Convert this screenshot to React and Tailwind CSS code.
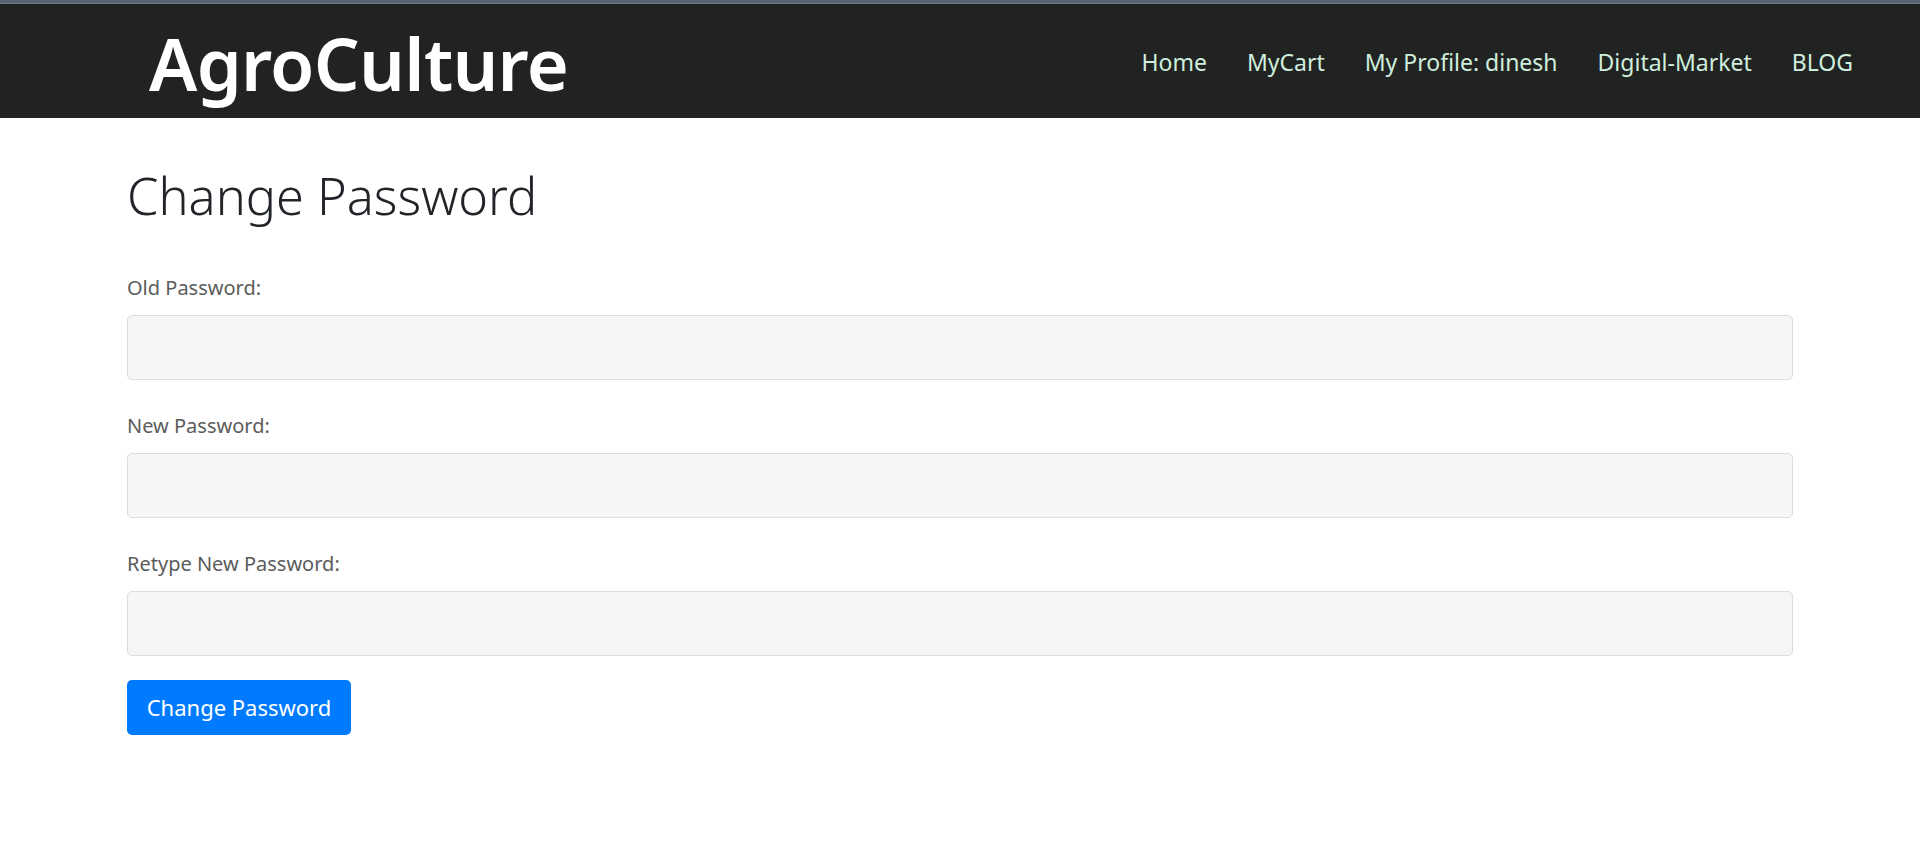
import React from "react";

const navLinks = ["Home", "MyCart", "My Profile: dinesh", "Digital-Market", "BLOG"];

const fields = ["Old Password:", "New Password:", "Retype New Password:"];

export default function App() {
  return (
    <div className="min-h-screen bg-white" style={{ fontFamily: '"Noto Sans", "Open Sans", sans-serif' }}>
      {/* top strip */}
      <div className="h-[4px] bg-[#55646f] border-b border-[#6f7e89]"></div>

      {/* Navbar */}
      <nav className="h-[114px] bg-[#212322] flex items-center justify-between pl-[149px] pr-[67px]">
        <a href="#" className="text-white font-semibold text-[72px] leading-none pt-[4px] tracking-[-0.01em]">
          AgroCulture
        </a>
        <ul className="flex items-center gap-[40px] pt-[6px]">
          {navLinks.map((link) => (
            <li key={link}>
              <a href="#" className="text-[#cfeedd] text-[23px] leading-none">
                {link}
              </a>
            </li>
          ))}
        </ul>
      </nav>

      {/* Content */}
      <div className="w-[1666px] mx-auto pt-[48px]">
        <h1 className="text-[50.5px] leading-[1.2] font-light text-[#212529] mb-[46px]">Change Password</h1>

        <form onSubmit={(e) => e.preventDefault()}>
          {fields.map((label) => (
            <div key={label} className="mb-[31px]">
              <label className="block text-[20px] leading-[30px] text-[#5c5c5c] mb-[12px]">{label}</label>
              <input
                type="password"
                className="w-full h-[65px] bg-[#f6f6f6] border border-[#dcdcdc] rounded-[5px] px-4 outline-none"
              />
            </div>
          ))}
          <button
            type="submit"
            className="mt-[-7px] w-[224px] h-[55px] bg-[#007bff] text-white text-[22px] rounded-[5px]"
          >
            Change Password
          </button>
        </form>
      </div>
    </div>
  );
}
